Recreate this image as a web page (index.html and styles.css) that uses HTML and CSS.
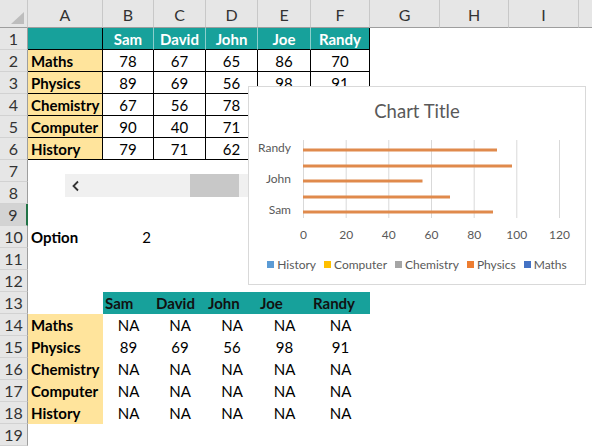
FILE: index.html
```html
<!DOCTYPE html>
<html>
<head>
<meta charset="utf-8">
<link rel="stylesheet" href="styles.css">
</head>
<body>
<div class="sheet">
  <div class="row hdr-row">
    <div class="corner"><span class="tri"></span></div>
    <div class="ch">A</div><div class="ch">B</div><div class="ch">C</div><div class="ch">D</div><div class="ch">E</div><div class="ch">F</div><div class="ch">G</div><div class="ch">H</div><div class="ch">I</div><div class="ch last"></div>
  </div>

  <div class="row">
    <div class="rh">1</div>
    <div class="c tb teal"></div>
    <div class="c tb teal hd">Sam</div><div class="c tb teal hd">David</div><div class="c tb teal hd">John</div><div class="c tb teal hd">Joe</div><div class="c tb teal hd end">Randy</div>
  </div>
  <div class="row">
    <div class="rh">2</div>
    <div class="c tb yel lbl">Maths</div>
    <div class="c tb num">78</div><div class="c tb num">67</div><div class="c tb num">65</div><div class="c tb num">86</div><div class="c tb num">70</div>
  </div>
  <div class="row">
    <div class="rh">3</div>
    <div class="c tb yel lbl">Physics</div>
    <div class="c tb num">89</div><div class="c tb num">69</div><div class="c tb num">56</div><div class="c tb num">98</div><div class="c tb num">91</div>
  </div>
  <div class="row">
    <div class="rh">4</div>
    <div class="c tb yel lbl">Chemistry</div>
    <div class="c tb num">67</div><div class="c tb num">56</div><div class="c tb num">78</div><div class="c tb num"></div><div class="c tb num"></div>
  </div>
  <div class="row">
    <div class="rh">5</div>
    <div class="c tb yel lbl">Computer</div>
    <div class="c tb num">90</div><div class="c tb num">40</div><div class="c tb num">71</div><div class="c tb num"></div><div class="c tb num"></div>
  </div>
  <div class="row">
    <div class="rh">6</div>
    <div class="c tb yel lbl">History</div>
    <div class="c tb num">79</div><div class="c tb num">71</div><div class="c tb num">62</div><div class="c tb num"></div><div class="c tb num"></div>
  </div>
  <div class="row"><div class="rh">7</div></div>
  <div class="row"><div class="rh">8</div></div>
  <div class="row"><div class="rh sel">9</div></div>
  <div class="row">
    <div class="rh">10</div>
    <div class="c lbl">Option</div>
    <div class="c right">2</div>
  </div>
  <div class="row"><div class="rh">11</div></div>
  <div class="row"><div class="rh">12</div></div>
  <div class="row">
    <div class="rh">13</div>
    <div class="c"></div>
    <div class="c teal hd2">Sam</div><div class="c teal hd2">David</div><div class="c teal hd2">John</div><div class="c teal hd2">Joe</div><div class="c teal hd2">Randy</div>
  </div>
  <div class="row">
    <div class="rh">14</div>
    <div class="c yel lbl">Maths</div>
    <div class="c num">NA</div><div class="c num">NA</div><div class="c num">NA</div><div class="c num">NA</div><div class="c num">NA</div>
  </div>
  <div class="row">
    <div class="rh">15</div>
    <div class="c yel lbl">Physics</div>
    <div class="c num">89</div><div class="c num">69</div><div class="c num">56</div><div class="c num">98</div><div class="c num">91</div>
  </div>
  <div class="row">
    <div class="rh">16</div>
    <div class="c yel lbl">Chemistry</div>
    <div class="c num">NA</div><div class="c num">NA</div><div class="c num">NA</div><div class="c num">NA</div><div class="c num">NA</div>
  </div>
  <div class="row">
    <div class="rh">17</div>
    <div class="c yel lbl">Computer</div>
    <div class="c num">NA</div><div class="c num">NA</div><div class="c num">NA</div><div class="c num">NA</div><div class="c num">NA</div>
  </div>
  <div class="row">
    <div class="rh">18</div>
    <div class="c yel lbl">History</div>
    <div class="c num">NA</div><div class="c num">NA</div><div class="c num">NA</div><div class="c num">NA</div><div class="c num">NA</div>
  </div>
  <div class="row"><div class="rh">19</div></div>

  <div class="scrollbar">
    <div class="sb-arrow">
      <svg width="10" height="12" viewBox="0 0 10 12"><path d="M7 1.5 L2.5 6 L7 10.5" fill="none" stroke="#333" stroke-width="1.8"/></svg>
    </div>
    <div class="sb-track"></div>
    <div class="sb-thumb"></div>
    <div class="sb-rest"></div>
  </div>

  <div class="chart">
    <div class="chart-title">Chart Title</div>
    <svg class="plot" width="336" height="120" viewBox="0 0 336 120">
      <g stroke="#d9d9d9" stroke-width="1">
        <line x1="54.5" y1="6" x2="54.5" y2="84"/>
        <line x1="97.2" y1="6" x2="97.2" y2="84"/>
        <line x1="139.8" y1="6" x2="139.8" y2="84"/>
        <line x1="182.5" y1="6" x2="182.5" y2="84"/>
        <line x1="225.2" y1="6" x2="225.2" y2="84"/>
        <line x1="267.8" y1="6" x2="267.8" y2="84"/>
        <line x1="310.5" y1="6" x2="310.5" y2="84"/>
      </g>
      <g fill="#e08a4c">
        <rect x="54" y="14.5" width="194" height="3"/>
        <rect x="54" y="30.5" width="209" height="3"/>
        <rect x="54" y="45.5" width="119.5" height="3"/>
        <rect x="54" y="61.5" width="147" height="3"/>
        <rect x="54" y="76.5" width="190" height="3"/>
      </g>
      <g class="cat" text-anchor="end">
        <text x="42" y="18">Randy</text>
        <text x="42" y="49">John</text>
        <text x="42" y="80">Sam</text>
      </g>
      <g class="val" text-anchor="middle">
        <text x="54.5" y="105">0</text>
        <text x="97.2" y="105">20</text>
        <text x="139.8" y="105">40</text>
        <text x="182.5" y="105">60</text>
        <text x="225.2" y="105">80</text>
        <text x="267.8" y="105">100</text>
        <text x="310.5" y="105">120</text>
      </g>
    </svg>
    <div class="legend">
      <span class="li"><i class="sw hist"></i>History</span>
      <span class="li"><i class="sw comp"></i>Computer</span>
      <span class="li"><i class="sw chem"></i>Chemistry</span>
      <span class="li"><i class="sw phys"></i>Physics</span>
      <span class="li"><i class="sw math"></i>Maths</span>
    </div>
  </div>
</div>
</body>
</html>
```

FILE: styles.css
```css
* { box-sizing: border-box; }
html, body {
  margin: 0;
  padding: 0;
  background: #fff;
}
body {
  width: 592px;
  height: 447px;
  overflow: hidden;
  font-family: Lato, "Liberation Sans", sans-serif;
  color: #000;
}
.sheet {
  position: relative;
  width: 592px;
  height: 447px;
}
.row {
  display: grid;
  grid-template-columns: 28px 75px 51px 52px 52px 53px 59px 70px 69px 70px 13px;
  height: 22px;
}
.hdr-row {
  height: 28px;
  background: #e6e6e6;
}
.corner {
  position: relative;
  border-right: 1px solid #c8c8c8;
  border-bottom: 1px solid #9e9e9e;
}
.tri {
  position: absolute;
  right: 3px;
  bottom: 3px;
  width: 0;
  height: 0;
  border-left: 13px solid transparent;
  border-bottom: 12px solid #bdbdbd;
}
.ch {
  border-right: 1px solid #c8c8c8;
  border-bottom: 1px solid #9e9e9e;
  display: flex;
  align-items: flex-end;
  justify-content: center;
  padding-bottom: 3px;
  font-size: 16px;
  color: #333;
}
.ch.last { border-right: none; }
.rh {
  background: #e6e6e6;
  border-right: 1px solid #9e9e9e;
  border-bottom: 1px solid #d2d2d2;
  display: flex;
  align-items: center;
  justify-content: center;
  font-size: 16px;
  color: #333;
}
.rh.sel {
  background: #d3d3d3;
  border-right: 2px solid #217346;
}
.c {
  display: flex;
  align-items: center;
  padding: 0 3px;
  font-size: 15px;
  white-space: nowrap;
}
.tb {
  border-right: 1px solid #000;
  border-bottom: 1px solid #000;
}
.teal { background: #17a19b; }
.yel { background: #ffe49c; }
.hd {
  color: #fff;
  font-weight: 700;
  justify-content: center;
  border-right-color: #8ccfcc;
}
.hd.end { border-right-color: #000; }
.hd2 {
  font-weight: 700;
  color: #111;
  padding-left: 2px;
}
.lbl { font-weight: 700; padding-left: 3px; }
.num { justify-content: center; }
.right { justify-content: flex-end; }

.scrollbar {
  position: absolute;
  left: 65px;
  top: 174px;
  width: 200px;
  height: 23px;
  display: flex;
  background: #f0f0f0;
}
.sb-arrow {
  width: 22px;
  display: flex;
  align-items: center;
  justify-content: center;
}
.sb-track { width: 103px; }
.sb-thumb { width: 49px; background: #c8c8c8; }
.sb-rest { flex: 1; }

.chart {
  position: absolute;
  left: 248px;
  top: 86px;
  width: 338px;
  height: 199px;
  background: #fff;
  border: 1px solid #d9d9d9;
  display: flex;
  flex-direction: column;
  z-index: 2;
}
.chart-title {
  height: 47px;
  padding-top: 12px;
  text-align: center;
  font-size: 18.5px;
  line-height: 24px;
  color: #595959;
}
.plot { display: block; }
.plot text {
  font-family: Lato, "Liberation Sans", sans-serif;
  font-size: 12px;
  fill: #595959;
}
.legend {
  height: 20px;
  display: flex;
  align-items: center;
  justify-content: center;
  gap: 8px;
  font-size: 12px;
  color: #595959;
}
.li {
  display: flex;
  align-items: center;
  gap: 3px;
}
.sw {
  display: inline-block;
  width: 7px;
  height: 7px;
}
.hist { background: #5b9bd5; }
.comp { background: #ffc000; }
.chem { background: #a5a5a5; }
.phys { background: #ed7d31; }
.math { background: #4472c4; }
```
